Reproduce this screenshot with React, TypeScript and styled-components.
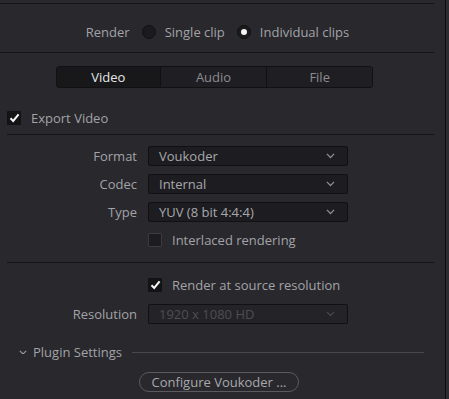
import React from 'react';
import styled, { createGlobalStyle } from 'styled-components';

const GlobalStyle = createGlobalStyle`
  html, body {
    margin: 0;
    padding: 0;
    background: #28282d;
    font-family: 'Open Sans', 'Noto Sans', sans-serif;
  }
`;

const Page = styled.div`
  display: flex;
  width: 449px;
  height: 399px;
  overflow: hidden;
  background: #28282d;
`;

const Panel = styled.div`
  width: 445px;
  display: flex;
  flex-direction: column;
`;

const EdgeLine = styled.div`
  width: 1px;
  background: #0d0d0f;
`;

const EdgeStrip = styled.div`
  flex: 1;
  background: #2d2c31;
`;

const Separator = styled.div<{ $left?: number; $right?: number; $top?: number }>`
  height: 1px;
  flex-shrink: 0;
  margin-left: ${(p) => p.$left ?? 0}px;
  margin-top: ${(p) => p.$top ?? 0}px;
  width: ${(p) => (p.$right ?? 434) - (p.$left ?? 0)}px;
  background: #151518;
`;

const RenderRow = styled.div`
  height: 48px;
  padding: 8px 10px 0 0;
  box-sizing: border-box;
  display: flex;
  align-items: center;
  justify-content: center;
  gap: 9px;
  color: #a3a3a7;
  font-size: 13px;
`;

const Radio = styled.span<{ $checked?: boolean }>`
  width: 14px;
  height: 14px;
  border-radius: 50%;
  background: #1b1b1e;
  border: 1px solid #111113;
  box-sizing: border-box;
  display: inline-flex;
  align-items: center;
  justify-content: center;
  margin-left: 3px;
  &::after {
    content: '';
    display: ${(p) => (p.$checked ? 'block' : 'none')};
    width: 6px;
    height: 6px;
    border-radius: 50%;
    background: #f4f4f4;
  }
`;

const Tabs = styled.div`
  margin: 13px 0 0 56px;
  width: 317px;
  height: 22px;
  display: flex;
  border: 1px solid #111113;
  border-radius: 3px;
  box-sizing: border-box;
  overflow: hidden;
  background: #1f1f23;
`;

const Tab = styled.div<{ $active?: boolean; $w: number }>`
  width: ${(p) => p.$w}px;
  display: flex;
  align-items: center;
  justify-content: center;
  font-size: 13px;
  color: ${(p) => (p.$active ? '#e6e6e6' : '#8c8c90')};
  background: ${(p) => (p.$active ? '#18181b' : '#1f1f23')};
  & + & {
    border-left: 1px solid #111113;
  }
`;

const CheckRow = styled.div<{ $left: number; $top: number }>`
  display: flex;
  align-items: center;
  gap: 10px;
  margin: ${(p) => p.$top}px 0 0 ${(p) => p.$left}px;
  height: 16px;
  font-size: 13px;
  color: #a3a3a7;
`;

const Box = styled.span<{ $checked?: boolean }>`
  width: 14px;
  height: 14px;
  box-sizing: border-box;
  border: 1px solid ${(p) => (p.$checked ? '#121214' : '#3b3b40')};
  background: ${(p) => (p.$checked ? '#141416' : '#1d1d21')};
  border-radius: 1px;
  display: inline-flex;
  align-items: center;
  justify-content: center;
`;

const Form = styled.div<{ $top: number }>`
  margin-top: ${(p) => p.$top}px;
  display: grid;
  grid-template-columns: 137px 200px;
  grid-auto-rows: 20px;
  column-gap: 11px;
  row-gap: 8px;
  align-items: center;
`;

const Label = styled.div`
  text-align: right;
  font-size: 13px;
  line-height: 20px;
  color: #a3a3a7;
`;

const Select = styled.div<{ $disabled?: boolean }>`
  height: 20px;
  box-sizing: border-box;
  border: 1px solid #111113;
  border-radius: 2px;
  background: ${(p) => (p.$disabled ? '#242428' : '#1d1d21')};
  color: ${(p) => (p.$disabled ? '#4e4e53' : '#a8a8ac')};
  font-size: 13px;
  display: flex;
  align-items: center;
  justify-content: space-between;
  padding: 0 12px 0 10px;
`;

const Chevron: React.FC<{ color?: string; size?: number }> = ({ color = '#8e8e92', size = 9 }) => (
  <svg width={size} height={size * 0.6} viewBox="0 0 10 6">
    <path d="M1 1 L5 5 L9 1" fill="none" stroke={color} strokeWidth="1.4" />
  </svg>
);

const Check = () => (
  <svg width="11" height="10" viewBox="0 0 11 10">
    <path d="M1.5 5.2 L4.2 8 L9.6 1.4" fill="none" stroke="#f6f6f6" strokeWidth="2" />
  </svg>
);

const SpanCell = styled.div`
  grid-column: 2;
`;

const PluginHeader = styled.div`
  margin: 19px 0 0 19px;
  height: 18px;
  display: flex;
  align-items: center;
  gap: 6px;
  font-size: 13px;
  color: #a3a3a7;
`;

const PluginLine = styled.div`
  width: 292px;
  height: 1px;
  background: #47474c;
  margin-left: 4px;
`;

const ButtonRow = styled.div`
  margin: 11px 0 0 139px;
`;

const PillButton = styled.div`
  width: 160px;
  height: 20px;
  box-sizing: border-box;
  border: 1px solid #5a5a5f;
  border-radius: 10px;
  display: flex;
  align-items: center;
  justify-content: center;
  font-size: 13px;
  color: #a8a8ac;
`;

export default function App() {
  return (
    <>
      <GlobalStyle />
      <Page>
        <Panel>
          <Separator $top={3} />
          <RenderRow>
            <span>Render</span>
            <Radio />
            <span>Single clip</span>
            <Radio $checked />
            <span>Individual clips</span>
          </RenderRow>
          <Separator />
          <Tabs>
            <Tab $active $w={104}>Video</Tab>
            <Tab $w={107}>Audio</Tab>
            <Tab $w={106}>File</Tab>
          </Tabs>
          <CheckRow $left={7} $top={22}>
            <Box $checked>
              <Check />
            </Box>
            <span>Export Video</span>
          </CheckRow>
          <Separator $left={7} $top={8} />
          <Form $top={11}>
            <Label>Format</Label>
            <Select>
              <span>Voukoder</span>
              <Chevron />
            </Select>
            <Label>Codec</Label>
            <Select>
              <span>Internal</span>
              <Chevron />
            </Select>
            <Label>Type</Label>
            <Select>
              <span>YUV (8 bit 4:4:4)</span>
              <Chevron />
            </Select>
            <SpanCell>
              <CheckRow $left={0} $top={0}>
                <Box />
                <span>Interlaced rendering</span>
              </CheckRow>
            </SpanCell>
          </Form>
          <Separator $left={7} $top={12} />
          <CheckRow $left={148} $top={14}>
            <Box $checked>
              <Check />
            </Box>
            <span>Render at source resolution</span>
          </CheckRow>
          <Form $top={11}>
            <Label>Resolution</Label>
            <Select $disabled>
              <span>1920 x 1080 HD</span>
              <Chevron color="#47474c" />
            </Select>
          </Form>
          <PluginHeader>
            <Chevron color="#9a9a9e" size={8} />
            <span>Plugin Settings</span>
            <PluginLine />
          </PluginHeader>
          <ButtonRow>
            <PillButton>Configure Voukoder ...</PillButton>
          </ButtonRow>
        </Panel>
        <EdgeLine />
        <EdgeStrip />
      </Page>
    </>
  );
}
